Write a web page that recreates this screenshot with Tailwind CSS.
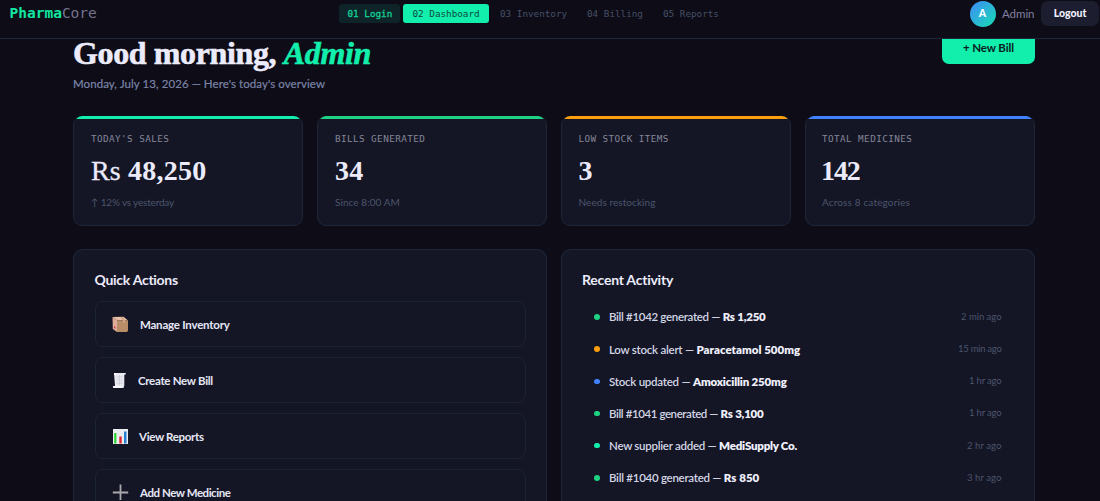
<!DOCTYPE html>
<html lang="en">
<head>
<meta charset="utf-8">
<title>PharmaCore</title>
<script src="https://cdn.jsdelivr.net/npm/@tailwindcss/browser@4"></script>
</head>
<body class="h-[501px] overflow-hidden bg-[#0d0c17] font-[Lato,sans-serif] text-[#e8e9f8]">

<nav class="fixed inset-x-0 top-0 z-10 flex h-[39px] items-start border-b border-[#1b2739] bg-[#0d0c17]">
  <div class="ml-[9.5px] mt-[3px] w-[329.5px] font-['DejaVu_Sans_Mono',monospace] text-[14.5px] leading-[20px] text-[#74738d]"><span class="font-bold text-[#12e6a2]">Pharma</span>Core</div>
  <div class="mt-[4px] flex h-[19px] items-stretch font-['DejaVu_Sans_Mono',monospace] text-[9.3px] leading-[19px] whitespace-pre text-[#465066]">
    <span class="w-[61px] rounded-[3px] bg-[#0e2429] pl-[8.5px] text-[#12cf96] [-webkit-text-stroke:0.3px_currentColor]">01 Login</span>
    <span class="ml-[3px] w-[86px] rounded-[3px] bg-[#12efac] pl-[9.5px] text-[#0b4a40]">02 Dashboard</span>
    <span class="ml-[11px] w-[87px]">03 Inventory</span>
    <span class="w-[76px]">04 Billing</span>
    <span>05 Reports</span>
  </div>
  <div class="ml-auto flex items-start">
    <span class="mt-[1px] flex size-[26px] items-center justify-center rounded-full bg-linear-135 from-[#3f88f5] to-[#17dcaf] text-[10.5px] font-black text-white">A</span>
    <span class="mt-[4px] ml-[6.5px] w-[39px] text-[11.5px] leading-[20px] tracking-[-0.05px] text-[#8280a0]">Admin</span>
    <span class="mt-[1px] mr-[1px] h-[25px] w-[58px] rounded-[7px] bg-[#1c1d2e] text-center text-[10.5px] leading-[25px] font-black text-[#f0f0fc]">Logout</span>
  </div>
</nav>

<main class="ml-[73px] w-[962px] pt-[32px]">
  <header class="flex h-[83.5px] items-start justify-between">
    <div>
      <h1 class="-mt-[0.5px] h-[42.5px] font-['Liberation_Serif',serif] text-[32px] leading-[42px] font-bold tracking-[-0.37px] whitespace-nowrap text-[#ecebfb] [-webkit-text-stroke:0.6px_currentColor]">Good morning, <em class="text-[#12efac]">Admin</em></h1>
      <p class="mt-[1px] text-[11.5px] leading-[18px] tracking-[0.07px] text-[#7b84a6] [-webkit-text-stroke:0.2px_currentColor]">Monday, July 13, 2026 — Here's today's overview</p>
    </div>
    <button class="h-[32px] w-[93px] rounded-[7px] bg-[#12efac] text-[11.5px] leading-[32px] font-bold tracking-[-0.1px] text-[#08221f]">+ New Bill</button>
  </header>

  <section class="grid grid-cols-4 gap-[14px]">
    <article class="h-[110px] overflow-hidden rounded-[9px] border border-t-0 border-[#1c273a] bg-[#141625]">
      <div class="h-[3px] bg-[#12efac]"></div>
      <div class="pl-[17px]">
        <h2 class="mt-[12px] font-['DejaVu_Sans_Mono',monospace] text-[9.3px] leading-[16px] tracking-[0.42px] text-[#858699]">TODAY'S SALES</h2>
        <p class="mt-[8px] font-['Liberation_Serif',serif] text-[28px] leading-[32px] font-bold tracking-[0.25px] text-[#ecebfb]"><span class="font-normal tracking-[0.1px] [-webkit-text-stroke:0.3px_currentColor]">Rs </span>48,250</p>
        <p class="mt-[7px] text-[10px] leading-[16px] tracking-[-0.18px] text-[#4b556c]">↑ 12% vs yesterday</p>
      </div>
    </article>
    <article class="h-[110px] overflow-hidden rounded-[9px] border border-t-0 border-[#1c273a] bg-[#141625]">
      <div class="h-[3px] bg-[#1fd283]"></div>
      <div class="pl-[17px]">
        <h2 class="mt-[12px] font-['DejaVu_Sans_Mono',monospace] text-[9.3px] leading-[16px] tracking-[0.42px] text-[#858699]">BILLS GENERATED</h2>
        <p class="mt-[8px] font-['Liberation_Serif',serif] text-[28px] leading-[32px] font-bold tracking-[0.25px] text-[#ecebfb]">34</p>
        <p class="mt-[7px] text-[10px] leading-[16px] tracking-[0.07px] text-[#4b556c]">Since 8:00 AM</p>
      </div>
    </article>
    <article class="h-[110px] overflow-hidden rounded-[9px] border border-t-0 border-[#1c273a] bg-[#141625]">
      <div class="h-[3px] bg-[#fb9f0e]"></div>
      <div class="pl-[16.5px]">
        <h2 class="mt-[12px] font-['DejaVu_Sans_Mono',monospace] text-[9.3px] leading-[16px] tracking-[0.42px] text-[#858699]">LOW STOCK ITEMS</h2>
        <p class="mt-[8px] font-['Liberation_Serif',serif] text-[28px] leading-[32px] font-bold text-[#ecebfb]">3</p>
        <p class="mt-[7px] text-[10px] leading-[16px] tracking-[0.07px] text-[#4b556c]">Needs restocking</p>
      </div>
    </article>
    <article class="h-[110px] overflow-hidden rounded-[9px] border border-t-0 border-[#1c273a] bg-[#141625]">
      <div class="h-[3px] bg-[#4181fb]"></div>
      <div class="pl-[16px]">
        <h2 class="mt-[12px] font-['DejaVu_Sans_Mono',monospace] text-[9.3px] leading-[16px] tracking-[0.42px] text-[#858699]">TOTAL MEDICINES</h2>
        <p class="-ml-[1px] mt-[8px] font-['Liberation_Serif',serif] text-[28px] leading-[32px] font-bold tracking-[-1.1px] text-[#ecebfb]">142</p>
        <p class="mt-[7px] text-[10px] leading-[16px] tracking-[0.15px] text-[#4b556c]">Across 8 categories</p>
      </div>
    </article>
  </section>

  <section class="mt-[23.5px] grid grid-cols-2 gap-[14px]">
    <article class="h-[252px] overflow-hidden rounded-t-[10px] border border-b-0 border-[#1c273a] bg-[#141625] px-[20.5px] pt-[20px]">
      <h2 class="text-[14px] leading-[20px] font-bold tracking-[-0.28px] text-[#ecebfb]">Quick Actions</h2>
      <div class="mt-[11px] flex flex-col gap-[10px] text-[11.5px] font-bold text-[#e6e7f6]">
        <div class="flex h-[46px] shrink-0 items-center rounded-[8px] border border-[#1b2436] pt-px pl-[16.5px]">
          <svg class="mr-[11px] size-[17px]" viewBox="0 0 17 17"><path d="M.5 1 11.5.8 16 4.5 5 4.2z" fill="#e6bfa4"/><path d="M.5 1 5 4.2V16L.8 13z" fill="#e0ab98"/><path d="M5 4.2 16 4.5V14.5L15 16H5z" fill="#b98d68"/><path d="M8.5 1 10.5.9 13 4.4V7L11 6.5V4.4z" fill="#d3a27c"/><path d="M2 10 3.5 11.2V12.8L2 12z" fill="#c9434e"/></svg>
          <span class="tracking-[-0.22px]">Manage Inventory</span>
        </div>
        <div class="flex h-[46px] shrink-0 items-center rounded-[8px] border border-[#1b2436] pt-px pl-[16.5px]">
          <svg class="mr-[11px] h-[17px] w-[15px]" viewBox="0 0 15 17"><path d="M2 1H14L13.3 2.8H12.3V13.5L11.5 16H1.5L.8 14H3z" fill="#e9e9ef"/><path d="M2 1H4.2V3H2zM.8 14H9.5V16H1.6z" fill="#fafaff"/><path d="M4.5 5H10.8M4.5 8H10.8M4.5 11H10.8M7.5 3V13" stroke="#c6c9d8" stroke-width=".7"/></svg>
          <span class="tracking-[-0.3px]">Create New Bill</span>
        </div>
        <div class="flex h-[46px] shrink-0 items-center rounded-[8px] border border-[#1b2436] pt-px pl-[16px]">
          <svg class="mr-[10.5px] size-[17px]" viewBox="0 0 17 17"><path d="M1 1H16V16H1z" fill="#ecedf1"/><path d="M2.2 5H4.4V15.5H2.2z" fill="#2cd42f"/><path d="M7.3 8.5H9.7V15.5H7.3z" fill="#e0202d"/><path d="M12 3.5H14.5V15.5H12z" fill="#2880d2"/></svg>
          <span class="tracking-[-0.33px]">View Reports</span>
        </div>
        <div class="flex h-[46px] shrink-0 items-center rounded-[8px] border border-[#1b2436] pt-px pl-[16.5px]">
          <svg class="mr-[11px] size-[17px]" viewBox="0 0 17 17"><path d="M8.5 .5V16M.8 8.5H16.2" stroke="#a9a9ad" stroke-width="1.8"/></svg>
          <span class="tracking-[-0.45px]">Add New Medicine</span>
        </div>
      </div>
    </article>

    <article class="h-[252px] overflow-hidden rounded-t-[10px] border border-b-0 border-[#1c273a] bg-[#141625] pr-[32.5px] pl-[20px] pt-[20px]">
      <h2 class="text-[14px] leading-[20px] font-bold tracking-[-0.24px] text-[#ecebfb]">Recent Activity</h2>
      <ul class="mt-[11px] pl-[12px] text-[11.5px] font-semibold text-[#d3d5e5]">
        <li class="flex h-[32.15px] items-center"><i class="mr-[9.5px] size-[5.5px] rounded-full bg-[#1fd283]"></i><p class="tracking-[-0.32px]">Bill #1042 generated — <b class="font-extrabold tracking-[-0.22px] text-[#f0f0fc]">Rs 1,250</b></p><time class="ml-auto text-[9.5px] font-normal tracking-[-0.03px] text-[#4b546c]">2 min ago</time></li>
        <li class="flex h-[32.15px] items-center"><i class="mr-[9.5px] size-[5.5px] rounded-full bg-[#fb9f0e]"></i><p class="tracking-[-0.25px]">Low stock alert — <b class="font-extrabold tracking-[0.02px] text-[#f0f0fc]">Paracetamol 500mg</b></p><time class="ml-auto text-[9.5px] font-normal tracking-[-0.28px] text-[#4b546c]">15 min ago</time></li>
        <li class="flex h-[32.15px] items-center"><i class="mr-[9.5px] size-[5.5px] rounded-full bg-[#4181fb]"></i><p class="tracking-[-0.25px]">Stock updated — <b class="font-extrabold tracking-[-0.16px] text-[#f0f0fc]">Amoxicillin 250mg</b></p><time class="ml-auto text-[9.5px] font-normal tracking-[-0.18px] text-[#4b546c]">1 hr ago</time></li>
        <li class="flex h-[32.15px] items-center"><i class="mr-[9.5px] size-[5.5px] rounded-full bg-[#1fd283]"></i><p class="tracking-[-0.41px]">Bill #1041 generated — <b class="font-extrabold tracking-[-0.22px] text-[#f0f0fc]">Rs 3,100</b></p><time class="ml-auto text-[9.5px] font-normal tracking-[-0.18px] text-[#4b546c]">1 hr ago</time></li>
        <li class="flex h-[32.15px] items-center"><i class="mr-[9.5px] size-[5.5px] rounded-full bg-[#12efac]"></i><p class="tracking-[-0.27px]">New supplier added — <b class="font-extrabold tracking-[-0.23px] text-[#f0f0fc]">MediSupply Co.</b></p><time class="ml-auto text-[9.5px] font-normal tracking-[0.07px] text-[#4b546c]">2 hr ago</time></li>
        <li class="flex h-[32.15px] items-center"><i class="mr-[9.5px] size-[5.5px] rounded-full bg-[#1fd283]"></i><p class="tracking-[-0.27px]">Bill #1040 generated — <b class="font-extrabold tracking-[0.05px] text-[#f0f0fc]">Rs 850</b></p><time class="ml-auto text-[9.5px] font-normal tracking-[0.07px] text-[#4b546c]">3 hr ago</time></li>
      </ul>
    </article>
  </section>
</main>
</body>
</html>
